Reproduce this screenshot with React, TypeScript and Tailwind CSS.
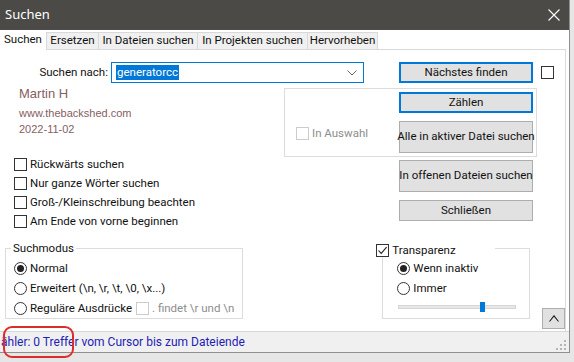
import React from "react";

const UI = "font-['Roboto',sans-serif]";

function Check({ checked, disabled }: { checked?: boolean; disabled?: boolean }) {
  return (
    <span
      className={`w-[13px] h-[13px] shrink-0 border bg-white flex items-center justify-center ${
        disabled ? "border-[#cccccc]" : "border-[#333333]"
      }`}
    >
      {checked && (
        <svg width="11" height="11" viewBox="0 0 11 11">
          <path d="M1.5 5.5 L4.2 8.4 L9.6 2.2" stroke="#222" strokeWidth="1.1" fill="none" />
        </svg>
      )}
    </span>
  );
}

function Radio({ checked }: { checked?: boolean }) {
  return (
    <span className="w-[13px] h-[13px] shrink-0 rounded-full border border-[#333333] bg-white flex items-center justify-center">
      {checked && <span className="w-[7px] h-[7px] rounded-full bg-[#222222]" />}
    </span>
  );
}

function Btn({ children, className, primary }: { children: React.ReactNode; className: string; primary?: boolean }) {
  return (
    <div
      className={`w-[134px] shrink-0 bg-[#e1e1e1] flex items-center justify-center whitespace-nowrap ${
        primary ? "border-2 border-[#0078d7]" : "border border-[#adadad]"
      } ${className}`}
    >
      {children}
    </div>
  );
}

function Row({ children }: { children: React.ReactNode }) {
  return <div className="h-[13px] flex items-center gap-[3px] whitespace-nowrap">{children}</div>;
}

export default function App() {
  const tabs = [
    { t: "Ersetzen", w: "w-[52px]" },
    { t: "In Dateien suchen", w: "w-[99px]" },
    { t: "In Projekten suchen", w: "w-[110px]" },
    { t: "Hervorheben", w: "w-[71px]" },
  ];
  return (
    <div className="w-[574px] h-[362px] bg-[#e6e6e6] relative overflow-hidden">
      <div className={`w-[570px] h-[353px] bg-white border-r border-b border-[#8f8f8f] flex flex-col ${UI} text-[11.5px] text-[#111111]`}>
        {/* title bar */}
        <div className="h-[30px] shrink-0 bg-[#4b4a47] flex items-center justify-between pl-[5px] pr-[9px] text-white">
          <span className="text-[13px] font-['Noto_Sans',sans-serif]">Suchen</span>
          <svg width="12" height="12" viewBox="0 0 12 12">
            <path d="M0.5 0.5 L11.5 11.5 M11.5 0.5 L0.5 11.5" stroke="#ffffff" strokeWidth="1.1" />
          </svg>
        </div>
        {/* tabs */}
        <div className="h-[20px] shrink-0 flex items-end">
          <div className="h-[20px] w-[46px] bg-white pl-[4px] flex items-center">Suchen</div>
          {tabs.map((x, i) => (
            <div
              key={x.t}
              className={`h-[18px] ${x.w} bg-[#f0f0f0] border-t border-b border-l border-[#d9d9d9] flex items-center justify-center whitespace-nowrap ${
                i === tabs.length - 1 ? "border-r" : ""
              }`}
            >
              {x.t}
            </div>
          ))}
          <div className="flex-1 h-[18px] border-b border-[#d9d9d9] mr-[3px]" />
        </div>
        {/* content */}
        <div className="flex-1 w-[566px] border-r border-[#dcdcdc] flex flex-col pt-[12px]">
          {/* row 1 */}
          <div className="h-[21px] flex items-center">
            <span className="w-[108px] text-right">Suchen nach:</span>
            <div className="ml-[3px] w-[253px] h-[21px] border border-[#0078d7] flex items-center pl-[4px] pr-[6px]">
              <span className="bg-[#0078d7] text-white leading-[15px] px-px">generatorcc</span>
              <svg className="ml-auto" width="10" height="6" viewBox="0 0 10 6">
                <path d="M0.5 0.5 L5 5 L9.5 0.5" stroke="#666" strokeWidth="1" fill="none" />
              </svg>
            </div>
            <Btn className="ml-[35px] h-[21px]" primary>
              Nächstes finden
            </Btn>
            <span className="ml-[8px]">
              <Check />
            </span>
          </div>
          {/* row 2 */}
          <div className="mt-[5px] h-[69px] flex">
            <div className="w-[284px] pl-[19px] font-['Liberation_Sans',Arial,sans-serif] text-[#86605f]">
              <div className="text-[13px] leading-[15px] mt-[-2px]">Martin H</div>
              <div className="text-[11px] leading-[15.5px] mt-[5px]">www.thebackshed.com</div>
              <div className="text-[11px] leading-[15.5px]">2022-11-02</div>
            </div>
            <div className="w-[253px] h-[69px] border border-[#dcdcdc] flex items-start justify-between pl-[11px] pr-[3px] pt-[3px]">
              <div className="mt-[33px] flex items-center gap-[3px] text-[#8d8d8d]">
                <Check disabled />
                <span>In Auswahl</span>
              </div>
              <div className="flex flex-col gap-[8px]">
                <Btn className="h-[21px]" primary>
                  Zählen
                </Btn>
                <Btn className="h-[32px]">Alle in aktiver Datei suchen</Btn>
              </div>
            </div>
          </div>
          {/* row 3 */}
          <div className="flex">
            <div className="w-[399px] pl-[14px] pt-[1px] flex flex-col gap-[6px]">
              <Row>
                <Check />
                <span>Rückwärts suchen</span>
              </Row>
              <Row>
                <Check />
                <span>Nur ganze Wörter suchen</span>
              </Row>
              <Row>
                <Check />
                <span>Groß-/Kleinschreibung beachten</span>
              </Row>
              <Row>
                <Check />
                <span>Am Ende von vorne beginnen</span>
              </Row>
            </div>
            <div className="pt-[3px] flex flex-col gap-[8px]">
              <Btn className="h-[32px]">In offenen Dateien suchen</Btn>
              <Btn className="h-[21px]">Schließen</Btn>
            </div>
          </div>
          {/* row 4 */}
          <div className="mt-[13px] flex-1 flex items-start">
            <div className="ml-[5px] mt-[7px] w-[239px] h-[71px] border border-[#dcdcdc] relative pl-[8px] pt-[13px] flex flex-col gap-[7px]">
              <span className="absolute left-[5px] top-[-9px] bg-white px-[2px] leading-[16px]">Suchmodus</span>
              <Row>
                <Radio checked />
                <span>Normal</span>
              </Row>
              <Row>
                <Radio />
                <span>Erweitert (\n, \r, \t, \0, \x...)</span>
              </Row>
              <Row>
                <Radio />
                <span className="w-[103px]">Reguläre Ausdrücke</span>
                <Check disabled />
                <span className="text-[#8d8d8d]">. findet \r und \n</span>
              </Row>
            </div>
            <div className="ml-[139px] mt-[7px] w-[148px] h-[71px] border border-[#dcdcdc] relative pl-[14px] pt-[13px] flex flex-col gap-[7px]">
              <div className="absolute left-[-7px] top-[-5px] w-[119px] h-[13px] bg-white flex items-center gap-[3px]">
                <Check checked />
                <span>Transparenz</span>
              </div>
              <Row>
                <Radio checked />
                <span>Wenn inaktiv</span>
              </Row>
              <Row>
                <Radio />
                <span>Immer</span>
              </Row>
              <div className="relative ml-[1px] mt-[3px] w-[118px] h-[4px] bg-[#e7e7e7] border border-[#d6d6d6]">
                <div className="absolute left-[81px] top-[-4px] w-[5px] h-[10px] bg-[#0078d7]" />
              </div>
            </div>
            <div className="ml-[12px] mt-[67px] w-[23px] h-[21px] shrink-0 bg-[#e1e1e1] border border-[#adadad] flex items-center justify-center">
              <svg width="10" height="7" viewBox="0 0 10 7">
                <path d="M0.5 6.5 L5 0.8 L9.5 6.5" stroke="#222" strokeWidth="1.1" fill="none" />
              </svg>
            </div>
          </div>
        </div>
        {/* status bar */}
        <div className="h-[21px] shrink-0 bg-[#f0f0f0] border-t border-[#d7d7d7] flex items-center justify-between pl-[1px] pr-[3px]">
          <span className="text-[#1e22b4] text-[12px] whitespace-nowrap">ähler: 0 Treffer vom Cursor bis zum Dateiende</span>
          <svg width="10" height="10" viewBox="0 0 10 10" className="self-end mb-[2px]">
            <rect x="8" y="0" width="2" height="2" fill="#b5b5b5" />
            <rect x="4" y="4" width="2" height="2" fill="#b5b5b5" />
            <rect x="8" y="4" width="2" height="2" fill="#b5b5b5" />
            <rect x="0" y="8" width="2" height="2" fill="#b5b5b5" />
            <rect x="4" y="8" width="2" height="2" fill="#b5b5b5" />
            <rect x="8" y="8" width="2" height="2" fill="#b5b5b5" />
          </svg>
        </div>
      </div>
      <div className="absolute left-[3px] top-[326px] w-[71px] h-[32px] border-2 border-[#dc2d2d] rounded-[9px]" />
    </div>
  );
}
